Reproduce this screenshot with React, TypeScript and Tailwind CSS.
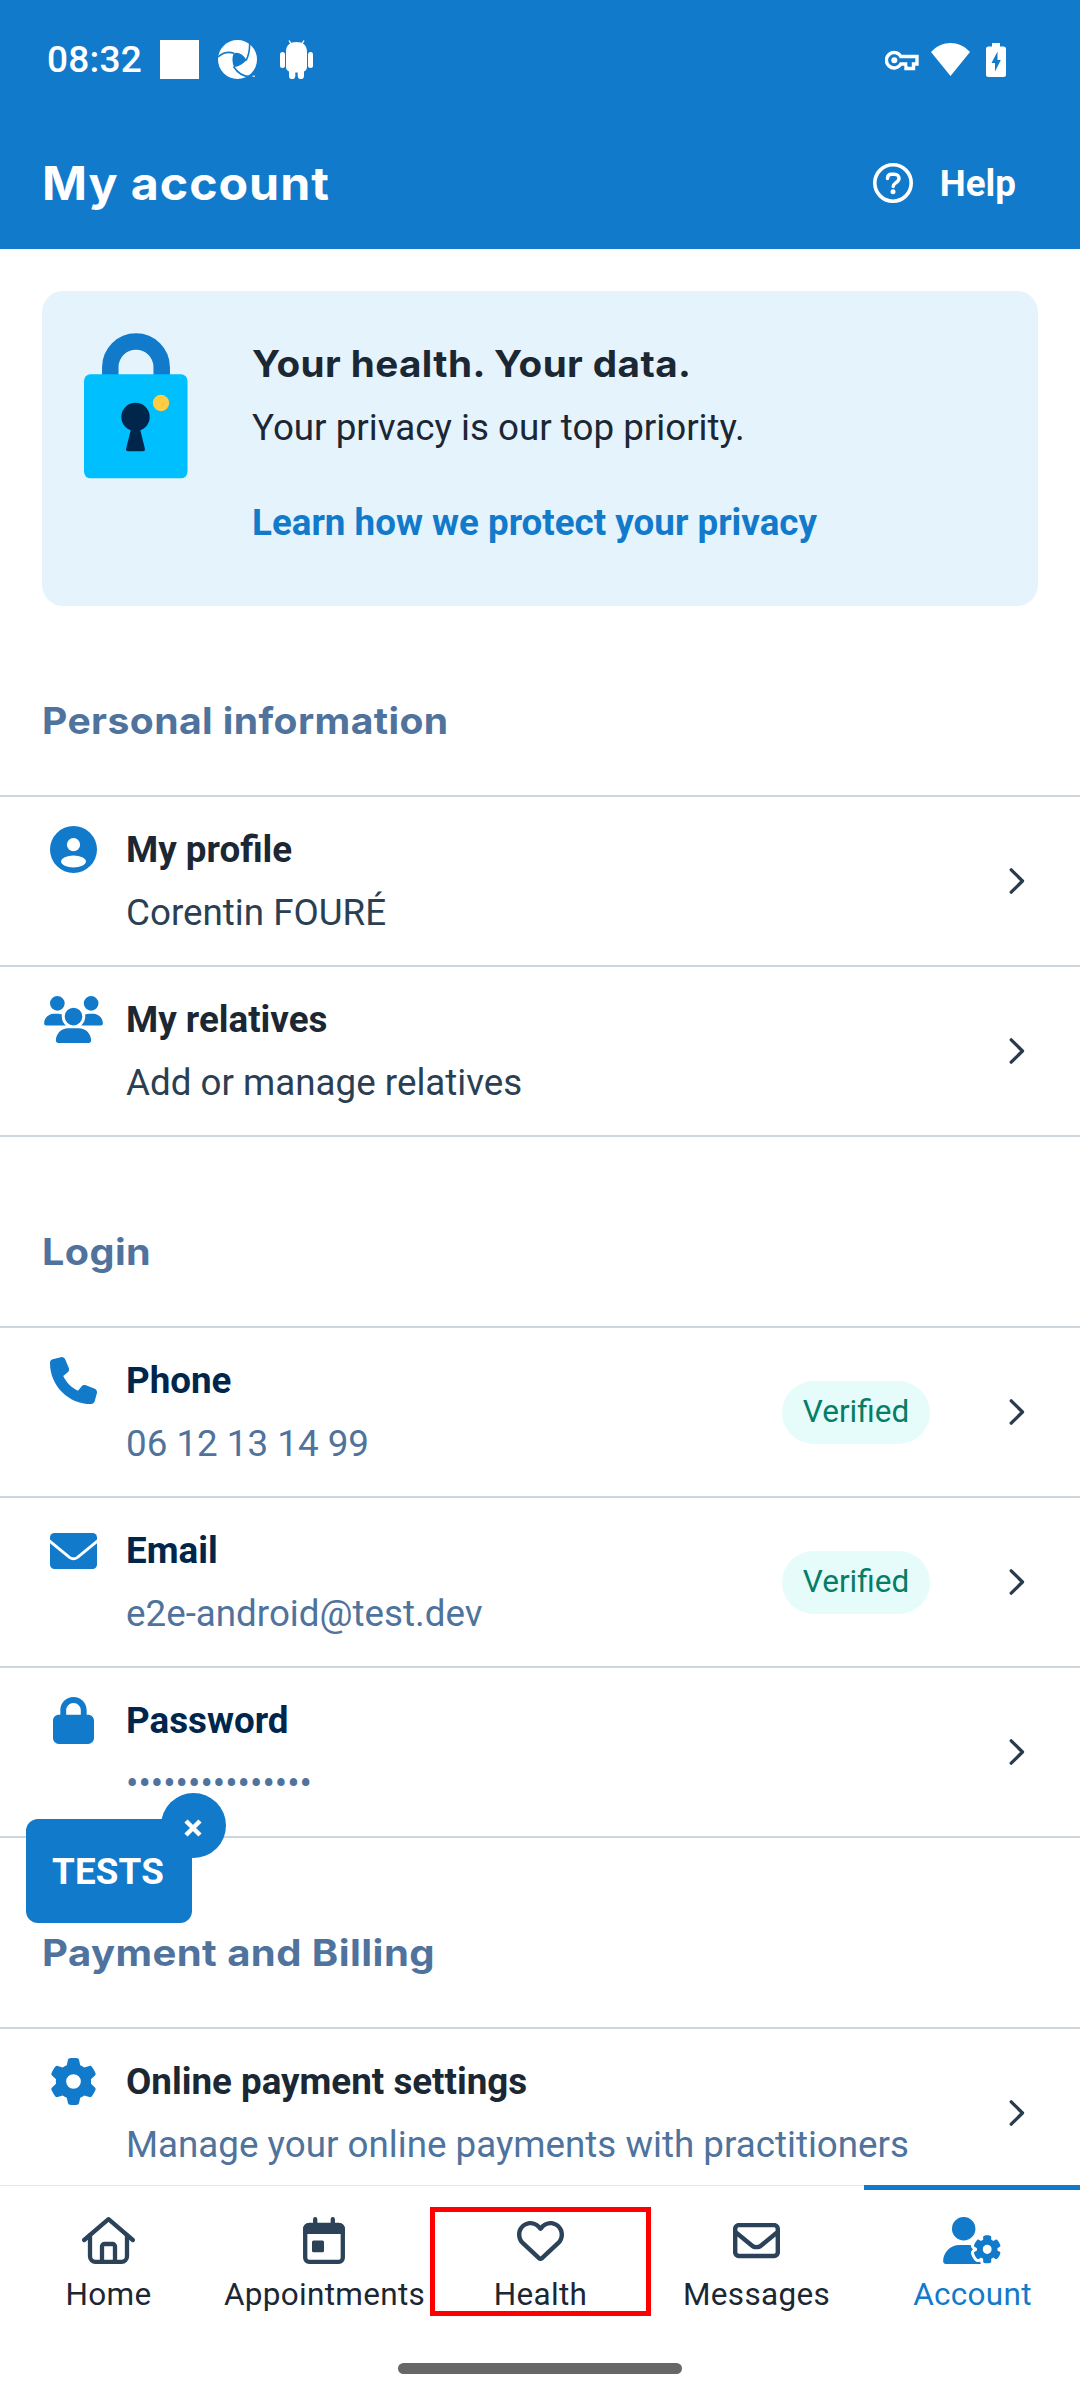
import type { ReactNode } from "react";
import { FaUsers, FaPhone, FaLock, FaGear, FaUserGear, FaRegHeart, FaRegEnvelope } from "react-icons/fa6";

const BLUE = "#127acb";

function ShutterIcon() {
  return (
    <svg width="39" height="39" viewBox="0 0 39 39">
      <circle cx="19.5" cy="19.5" r="19.5" fill="#fff" />
      <path d="M15.5 13.5C20 11.5 24.5 14 28.5 20C25 24 20 27 16 27C14 22.5 14 17.5 15.5 13.5Z" fill={BLUE} />
      <path d="M0 17C5 12.5 11 11.5 16 13.2M31.5 1.5C32 8 31.5 14 28 20.5M15.5 26.5C19 32 25 37 33 36.5" fill="none" stroke={BLUE} strokeWidth="1.6" />
      <path d="M27 39L39 30V39Z" fill={BLUE} />
      <path d="M34.500 36.200h2.500" stroke="#fff" strokeWidth="1" />
    </svg>
  );
}

function DroidIcon() {
  return (
    <svg width="33" height="39" viewBox="0 0 33 39" fill="#fff">
      <path d="M6 12C6 5 10 2 16.500 2S27 5 27 12V27a5 5 0 0 1-3 4.500V36a3 3 0 0 1-6.300 0V32.500H15.300V36A3 3 0 0 1 9 36V31.500A5 5 0 0 1 6 27Z" />
      <rect x="0" y="12" width="5" height="16" rx="2.500" />
      <rect x="28" y="12" width="5" height="16" rx="2.500" />
      <path d="M9 .5l2.500 4M24 .5l-2.500 4" stroke="#fff" strokeWidth="1.400" />
    </svg>
  );
}

function KeyIcon() {
  return (
    <svg width="34" height="21" viewBox="0 0 34 21">
      <path d="M15.800 6.500H32V14H28.500V18.500H21V14H15.800A7.700 7.700 0 1 1 15.800 6.500Z" fill="none" stroke="#fff" strokeWidth="3.400" />
      <path d="M15 9.500h14v2.600h-3.600v4h-3v-4H15z" fill={BLUE} />
      <circle cx="9.300" cy="10.300" r="3" fill="#fff" />
    </svg>
  );
}

function WifiIcon() {
  return (
    <svg width="39" height="33" viewBox="0 0 39 33">
      <path d="M0 9C11-3 28-3 39 9L19.500 33Z" fill="#fff" />
    </svg>
  );
}

function BatteryIcon() {
  return (
    <svg width="20" height="34" viewBox="0 0 20 34">
      <path d="M6 0h8v3.500h3.500A2.500 2.500 0 0 1 20 6v25.500A2.500 2.500 0 0 1 17.500 34h-15A2.500 2.500 0 0 1 0 31.500V6a2.500 2.500 0 0 1 2.500-2.500H6z" fill="#fff" />
      <path d="M11.500 8.500L5.500 20H9V28.500L14.800 17H11.500z" fill={BLUE} />
    </svg>
  );
}

function HelpIcon() {
  return (
    <svg width="40" height="40" viewBox="0 0 40 40" fill="none" stroke="#fff">
      <circle cx="20" cy="20" r="18.200" strokeWidth="3.600" />
      <path d="M14.500 15.500c0-2.700 1.800-4.200 4.200-4.200h2.800c2.600 0 4.500 1.700 4.500 4.200 0 4-5.800 4.200-5.800 8" strokeWidth="3.500" strokeLinecap="round" />
      <circle cx="20" cy="28.800" r="2.500" fill="#fff" stroke="none" />
    </svg>
  );
}

function PadlockArt() {
  return (
    <svg width="104" height="146" viewBox="0 0 104 146">
      <path d="M26.300 46V34.200a25.700 25.700 0 0 1 51.400 0V46" fill="none" stroke={BLUE} strokeWidth="16.500" />
      <rect y="41.300" width="103.500" height="104" rx="6.500" fill="#00bfff" />
      <circle cx="51.500" cy="84" r="14.200" fill="#00264c" />
      <path d="M47.500 94h8l5.500 22a2 2 0 0 1-2 2.200H44a2 2 0 0 1-2-2.200z" fill="#00264c" />
      <circle cx="77" cy="70" r="8.200" fill="#ffcd44" />
    </svg>
  );
}

function ProfileIcon() {
  return (
    <svg width="47" height="47" viewBox="0 0 47 47">
      <circle cx="23.500" cy="23.500" r="23.500" fill={BLUE} />
      <circle cx="23.500" cy="18.700" r="6.600" fill="#fff" />
      <ellipse cx="23.500" cy="35.400" rx="12.400" ry="6" fill="#fff" />
    </svg>
  );
}

function MailIcon() {
  return (
    <svg width="47" height="36" viewBox="0 0 47 36">
      <rect width="47" height="36" rx="4.500" fill={BLUE} />
      <path d="M-1 7.500L19.500 24.300q4 3 8 0L48 7.500" fill="none" stroke="#fff" strokeWidth="2.800" />
    </svg>
  );
}

function HomeIcon() {
  return (
    <svg width="53" height="47" viewBox="0 0 53 47" fill="none" stroke="#2b4259" strokeWidth="4.300" strokeLinecap="round" strokeLinejoin="round">
      <path d="M2.200 23L26.500 2.200L50.800 23" />
      <path d="M8 18.500V39.300a5.500 5.500 0 0 0 5.500 5.500h26a5.500 5.500 0 0 0 5.500-5.500V18.500" />
      <path d="M20 44V29.500a2.500 2.500 0 0 1 2.500-2.500h8a2.500 2.500 0 0 1 2.500 2.500V44" />
    </svg>
  );
}

function CalendarIcon() {
  return (
    <svg width="42" height="47" viewBox="0 0 42 47" fill="none" stroke="#2b4259" strokeWidth="4.300">
      <rect x="2.200" y="8" width="37.600" height="36.800" rx="4" />
      <path d="M12.200 2.200v8M29.800 2.200v8" strokeLinecap="round" />
      <path d="M0 17V12a6 6 0 0 1 6-6h30a6 6 0 0 1 6 6v5z" fill="#2b4259" stroke="none" />
      <rect x="9" y="23.500" width="12" height="11.700" rx="1.500" fill="#2b4259" stroke="none" />
    </svg>
  );
}

function Chevron() {
  return (
    <svg width="18" height="28" viewBox="0 0 18 28" fill="none" stroke="#2b3b4e" strokeWidth="3.300" strokeLinecap="round" strokeLinejoin="round">
      <path d="M3.200 2.800L14.500 14L3.200 25.200" />
    </svg>
  );
}

function SectionTitle({ children, stretch }: { children: ReactNode; stretch: string }) {
  return (
    <h2 className="mt-[83px] mb-[43px] px-[42px] font-['Inter'] text-[36.75px] leading-[63px] font-bold tracking-[0.4px] whitespace-nowrap text-[#4f739c]">
      <span className={`inline-block origin-left ${stretch}`}>{children}</span>
    </h2>
  );
}

type RowProps = {
  icon: ReactNode;
  title: string;
  subtitle: string;
  titleColor?: string;
  subColor?: string;
  verified?: boolean;
};

function Row({ icon, title, subtitle, titleColor = "text-[#1b2733]", subColor = "text-[#4f739c]", verified }: RowProps) {
  return (
    <li className="flex h-[170px] items-center border-b-2 border-[#cbd6de]">
      <div className="ml-[42px] flex h-[126px] w-[63px] shrink-0 items-start justify-center pt-[8px]">
        <div className="flex h-[47px] items-center">{icon}</div>
      </div>
      <div className="ml-[21px] flex-1 text-[36.75px] leading-[63px] whitespace-nowrap">
        <p className={`font-bold ${titleColor}`}>{title}</p>
        <p className={subColor}>{subtitle}</p>
      </div>
      {verified && (
        <span className="mr-[78px] flex h-[63px] w-[148px] items-center justify-center rounded-full bg-[#e6fcfa] text-[31.5px] text-[#067d66]">
          Verified
        </span>
      )}
      <div className="mr-[54px]">
        <Chevron />
      </div>
    </li>
  );
}

function Tab({ icon, label, active }: { icon: ReactNode; label: string; active?: boolean }) {
  return (
    <a className={`relative flex w-[216px] flex-col items-center pt-[31px] ${active ? "text-[#127acb]" : "text-[#1b2733]"}`}>
      {active && <span className="absolute inset-x-0 -top-px h-[5px] bg-[#127acb]" />}
      <span className="flex h-[47px] items-center">{icon}</span>
      <span className="mt-[11px] pl-px text-[31.5px] leading-[40px] tracking-[0.3px] whitespace-nowrap">{label}</span>
    </a>
  );
}

export default function App() {
  return (
    <div className="relative flex h-[2400px] w-[1080px] flex-col overflow-hidden bg-white font-['Roboto',sans-serif]">
      <header className="h-[249px] shrink-0 bg-[#127acb] text-white">
        <div className="flex h-[118px] items-center pt-[1px] pr-[74px] pl-[47px]">
          <span className="w-[113px] text-[37px] font-medium tracking-[0.2px]">08:32</span>
          <span className="mr-[19px] size-[39px] bg-white" />
          <ShutterIcon />
          <span className="ml-[23px]"><DroidIcon /></span>
          <span className="ml-auto flex items-center">
            <span className="mt-[2px]"><KeyIcon /></span>
            <span className="ml-[12px]"><WifiIcon /></span>
            <span className="ml-[16px]"><BatteryIcon /></span>
          </span>
        </div>
        <div className="flex h-[131px] items-center pr-[64px] pb-[1px] pl-[42px]">
          <h1 className="origin-left scale-x-[1.039] font-['Inter'] text-[46.5px] leading-[63px] font-bold tracking-[0.9px]">My account</h1>
          <span className="ml-auto"><HelpIcon /></span>
          <span className="ml-[27px] text-[36.75px] leading-[63px] font-bold">Help</span>
        </div>
      </header>

      <main className="min-h-0 flex-1 overflow-hidden">
        <section className="mx-[42px] mt-[42px] flex h-[315px] rounded-[21px] bg-[#e5f3fd] p-[42px]">
          <PadlockArt />
          <div className="ml-[64px] text-[36.75px] leading-[63px] whitespace-nowrap text-[#1b2733]">
            <h2 className="font-['Inter'] font-bold tracking-[0.4px]">
              <span className="relative -top-px inline-block origin-left scale-x-[1.051]">Your health. Your data.</span>
            </h2>
            <p>Your privacy is our top priority.</p>
            <a className="mt-[32px] block font-bold text-[#127acb]">Learn how we protect your privacy</a>
          </div>
        </section>

        <SectionTitle stretch="scale-x-[1.063]">Personal information</SectionTitle>
        <ul className="border-t-2 border-[#cbd6de]">
          <Row icon={<ProfileIcon />} title="My profile" subtitle="Corentin FOURÉ" subColor="text-[#2b3f54]" />
          <Row icon={<FaUsers className="h-[47px] w-[59px] text-[#127acb]" />} title="My relatives" subtitle="Add or manage relatives" subColor="text-[#2b3f54]" />
        </ul>

        <SectionTitle stretch="scale-x-[1.076]">Login</SectionTitle>
        <ul className="border-t-2 border-[#cbd6de]">
          <Row icon={<FaPhone className="size-[47px] text-[#127acb]" />} title="Phone" subtitle="06 12 13 14 99" titleColor="text-[#00264c]" verified />
          <Row icon={<MailIcon />} title="Email" subtitle="e2e-android@test.dev" titleColor="text-[#00264c]" verified />
          <Row icon={<FaLock className="h-[47px] w-[41px] text-[#127acb]" />} title="Password" subtitle="•••••••••••••••" titleColor="text-[#00264c]" />
        </ul>

        <SectionTitle stretch="scale-x-[1.09]">Payment and Billing</SectionTitle>
        <ul className="border-t-2 border-[#cbd6de]">
          <Row icon={<FaGear className="size-[47px] text-[#127acb]" />} title="Online payment settings" subtitle="Manage your online payments with practitioners" />
        </ul>
      </main>

      <nav className="relative h-[215px] shrink-0 border-t border-[#e4e6e8] bg-white">
        <div className="flex">
          <Tab icon={<HomeIcon />} label="Home" />
          <Tab icon={<CalendarIcon />} label="Appointments" />
          <Tab icon={<FaRegHeart className="size-[47px] text-[#2b4259]" />} label="Health" />
          <Tab icon={<FaRegEnvelope className="size-[47px] text-[#2b4259]" />} label="Messages" />
          <Tab icon={<FaUserGear className="h-[47px] w-[59px]" />} label="Account" active />
        </div>
        <div className="mx-auto mt-[48px] h-[11px] w-[284px] rounded-full bg-[#676767]" />
        <div className="absolute top-[21px] left-[430px] h-[109px] w-[221px] border-[5px] border-[#ff0000]" />
      </nav>

      <div className="absolute top-[1819px] left-[26px] flex h-[104px] w-[166px] items-center justify-center rounded-[12px] bg-[#127acb] pt-[2px] pr-[2px] text-[36.75px] font-bold tracking-[0.2px] text-white">
        TESTS
        <span className="absolute -top-[26px] left-[135px] flex size-[65px] items-center justify-center rounded-full bg-[#127acb]">
          <svg width="18" height="18" viewBox="0 0 18 18" className="mt-[4px] mr-[2px]" stroke="#fff" strokeWidth="4.500">
            <path d="M2 2l14 14M16 2L2 16" />
          </svg>
        </span>
      </div>
    </div>
  );
}
